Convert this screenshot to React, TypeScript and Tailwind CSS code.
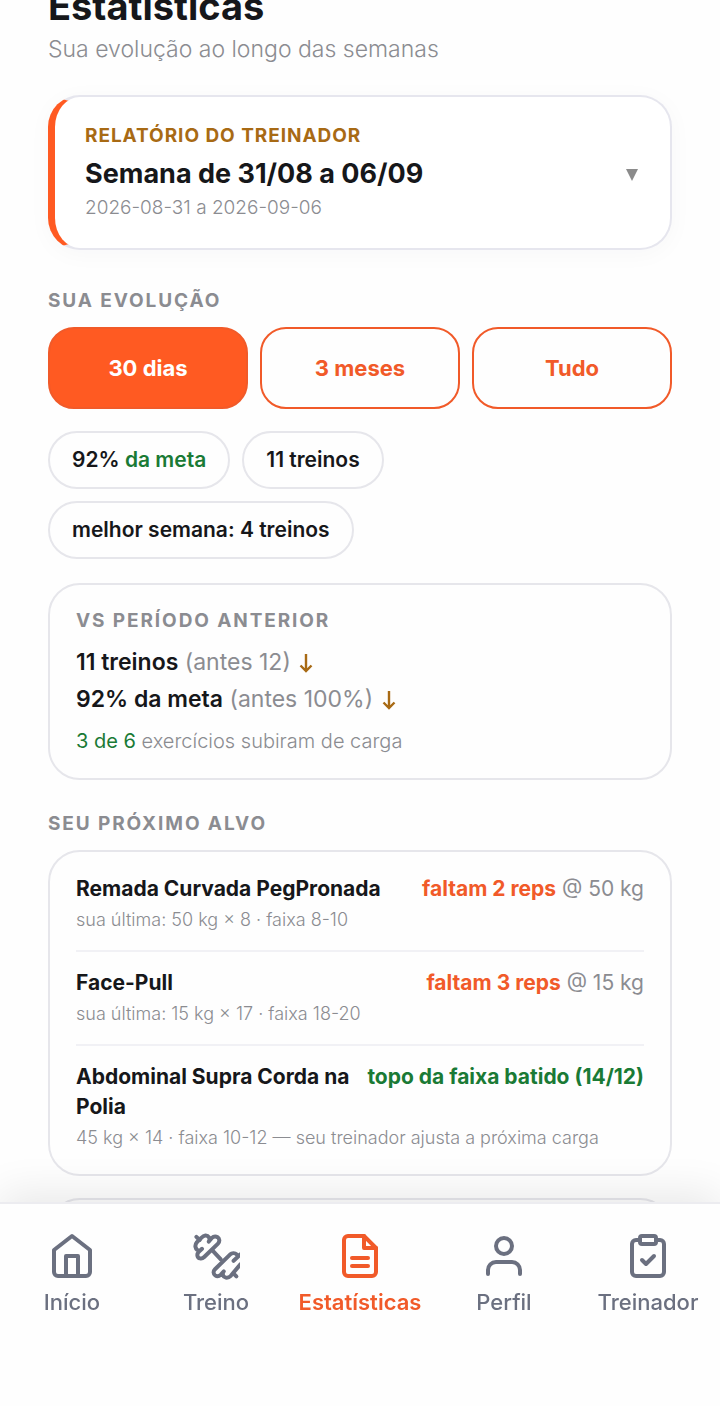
import { useState } from 'react';
import type { ReactNode } from 'react';

type Target = {
  name: string;
  last: string;
  missing?: string;
  load?: string;
  done?: string;
};

const PERIODS = [
  { key: '30d', label: '30 dias' },
  { key: '3m', label: '3 meses' },
  { key: 'all', label: 'Tudo' },
];

const COMPARISON = [
  { now: '11 treinos', before: '(antes 12)' },
  { now: '92% da meta', before: '(antes 100%)' },
];

const TARGETS: Target[] = [
  {
    name: 'Remada Curvada PegPronada',
    last: 'sua última: 50 kg × 8 · faixa 8-10',
    missing: 'faltam 2 reps',
    load: '@ 50 kg',
  },
  {
    name: 'Face-Pull',
    last: 'sua última: 15 kg × 17 · faixa 18-20',
    missing: 'faltam 3 reps',
    load: '@ 15 kg',
  },
  {
    name: 'Abdominal Supra Corda na Polia',
    last: '45 kg × 14 · faixa 10-12 — seu treinador ajusta a próxima carga',
    done: 'topo da faixa batido (14/12)',
  },
];

const NAV_ITEMS = [
  {
    key: 'inicio',
    label: 'Início',
    icon: (
      <>
        <path d="m3 9 9-7 9 7v11a2 2 0 0 1-2 2H5a2 2 0 0 1-2-2z" />
        <path d="M9 22V12h6v10" />
      </>
    ),
  },
  {
    key: 'treino',
    label: 'Treino',
    icon: (
      <>
        <path d="m2.2 2.4 1.6 1.6" />
        <path d="M5 8.4 3.4 9.9C2.2 11.1 2.6 12.9 4 13.2c.8.2 1.500-.1 2.100-.7l6.900-6.700c1-1 .8-2.500-.2-3.200-1-.6-2.200-.3-3 .5L8.400 4.800C9.400 3.200 8.200 1.700 6.700 1.800c-1 .1-1.500.6-2.200 1.300L2.500 5.100C1.200 6.500 1.500 8.600 3.300 9.400" />
        <path d="m10.200 9.200 4.200 4.500" />
        <path d="M24.2 11.200 20.800 14.400M22.400 11.200c-1-.9-2.400-.8-3.400.1l-7.500 7.300c-1 1-.9 2.400.1 3.100.9.6 2 .4 2.800-.4l1.500-1.600c-1 1.300-.4 2.800 1 3.100 1 .2 1.800-.2 2.500-.9L24.200 16.200" />
        <path d="m20.800 20.800 1.400 1.400" />
      </>
    ),
  },
  {
    key: 'estatisticas',
    label: 'Estatísticas',
    icon: (
      <>
        <path d="M14 2H6a2 2 0 0 0-2 2v16a2 2 0 0 0 2 2h12a2 2 0 0 0 2-2V8z" />
        <path d="M14 2v6h6" />
        <path d="M8 13h8" />
        <path d="M8 17h8" />
      </>
    ),
  },
  {
    key: 'perfil',
    label: 'Perfil',
    icon: (
      <>
        <path d="M20 21v-2a4 4 0 0 0-4-4H8a4 4 0 0 0-4 4v2" />
        <circle cx="12" cy="7" r="4" />
      </>
    ),
  },
  {
    key: 'treinador',
    label: 'Treinador',
    icon: (
      <>
        <path d="M16 4h2a2 2 0 0 1 2 2v14a2 2 0 0 1-2 2H6a2 2 0 0 1-2-2V6a2 2 0 0 1 2-2h2" />
        <rect x="8" y="2" width="8" height="4" rx="1" />
        <path d="m9 14 2 2 4-4" />
      </>
    ),
  },
];

function SectionLabel({ children }: { children: ReactNode }) {
  return <h2 className="text-[19px] leading-[26px] font-bold tracking-widest uppercase text-[#8b8c91]">{children}</h2>;
}

function Chip({ children }: { children: ReactNode }) {
  return (
    <li className="rounded-full border-2 border-[#e6e6eb] px-[22px] py-3 text-[21px] leading-[30px] font-semibold">
      {children}
    </li>
  );
}

function TargetRow({ target }: { target: Target }) {
  return (
    <li className="border-b-2 border-[#f1f1f5] py-4 last:border-b-0">
      <div className="flex items-start justify-between gap-3 text-[21px] leading-[30px]">
        <h3 className="font-bold">{target.name}</h3>
        {target.done ? (
          <span className="flex-shrink-0 font-bold text-[#1a7a35]">{target.done}</span>
        ) : (
          <span className="flex-shrink-0 text-[#8b8c91]">
            <b className="font-bold text-[#f15a29]">{target.missing}</b> {target.load}
          </span>
        )}
      </div>
      <p className="mt-0.5 text-lg leading-7 font-light text-[#8b8c91]">{target.last}</p>
    </li>
  );
}

export default function App() {
  const [period, setPeriod] = useState('30d');
  const [tab, setTab] = useState('estatisticas');

  return (
    <div className="min-h-screen overflow-hidden bg-[#fefefe] font-['Inter',sans-serif] text-[#16171a]">
      <main className="px-12">
        {/* Header */}
        <h1 className="-mt-[18px] text-[38px] leading-[48px] font-bold">Estatísticas</h1>
        <p className="text-[23px] leading-[38px] font-light text-[#8b8c91]">Sua evolução ao longo das semanas</p>

        {/* Coach report */}
        <button className="mt-[27px] flex w-full items-center justify-between rounded-[32px] border-2 border-l-[7px] border-[#e6e6ee] border-l-[#ff5a22] bg-white py-[26px] pr-8 pl-[30px] text-left shadow-[0_4px_24px_rgba(20,20,60,0.03)]">
          <span className="flex flex-col">
            <span className="text-[19px] leading-[26px] font-bold tracking-wider uppercase text-[#a86a14]">
              Relatório do treinador
            </span>
            <span className="mt-[7px] text-[27px] leading-9 font-bold">Semana de 31/08 a 06/09</span>
            <span className="mt-0.5 text-[19px] leading-7 font-light text-[#8b8c91]">2026-08-31 a 2026-09-06</span>
          </span>
          <svg width="12" height="16" viewBox="0 0 12 16" className="text-[#8b8b8b]" aria-hidden="true">
            <path d="M0 4h12L6 16z" fill="currentColor" />
          </svg>
        </button>

        {/* Evolution */}
        <section className="mt-[38px]">
          <SectionLabel>Sua evolução</SectionLabel>
          <div className="mt-[13px] grid grid-cols-3 gap-3">
            {PERIODS.map(({ key, label }) => (
              <button
                key={key}
                onClick={() => setPeriod(key)}
                className={`rounded-[26px] border-2 border-[#f15a29] py-[23px] text-[22px] leading-8 font-bold ${
                  period === key ? 'bg-[#ff5a22] text-white' : 'text-[#f15a29]'
                }`}
              >
                {label}
              </button>
            ))}
          </div>

          <ul className="mt-[22px] flex flex-wrap gap-3">
            <Chip>
              92% <span className="text-[#1a7a35]">da meta</span>
            </Chip>
            <Chip>11 treinos</Chip>
            <Chip>melhor semana: 4 treinos</Chip>
          </ul>

          <div className="mt-6 rounded-[32px] border-2 border-[#e6e6eb] px-[26px] py-[23px]">
            <SectionLabel>vs período anterior</SectionLabel>
            <div className="mt-2.5 text-[23px] leading-[37px]">
              {COMPARISON.map(({ now, before }) => (
                <p key={now}>
                  <b className="font-semibold">{now}</b> <span className="text-[#8b8c91]">{before}</span>{' '}
                  <svg
                    width="14"
                    height="20"
                    viewBox="0 0 14 20"
                    fill="none"
                    stroke="currentColor"
                    strokeWidth="2.4"
                    className="ml-0.5 inline-block text-[#a86a14]"
                    aria-label="caiu"
                  >
                    <path d="M7 0v17M1.500 11.500 7 17l5.500-5.500" />
                  </svg>
                </p>
              ))}
            </div>
            <p className="mt-[9px] text-xl leading-7 font-light text-[#8b8c91]">
              <span className="font-normal text-[#1a7a35]">3 de 6</span> exercícios subiram de carga
            </p>
          </div>
        </section>

        {/* Next targets */}
        <section className="mt-[31px]">
          <SectionLabel>Seu próximo alvo</SectionLabel>
          <ul className="mt-[13px] rounded-[32px] border-2 border-[#e6e6eb] px-[26px] py-1.5">
            {TARGETS.map(target => (
              <TargetRow key={target.name} target={target} />
            ))}
          </ul>
        </section>

        <div className="mt-[22px] h-28 rounded-[32px] border-2 border-[#e6e6eb]" />
      </main>

      {/* Bottom navigation */}
      <nav className="fixed inset-x-0 bottom-0 grid grid-cols-5 border-t-2 border-[#ececf0] bg-[#fefefe] pt-7 pb-[90px] shadow-[0_-8px_40px_rgba(0,0,0,0.09)]">
        {NAV_ITEMS.map(({ key, label, icon }) => (
          <a
            key={key}
            href={`#${key}`}
            onClick={() => setTab(key)}
            className={`flex flex-col items-center gap-2 text-[22px] leading-7 ${
              tab === key ? 'font-semibold text-[#f15a29]' : 'font-medium text-[#6b7080]'
            }`}
          >
            <svg
              width="48"
              height="48"
              viewBox="0 0 24 24"
              fill="none"
              stroke="currentColor"
              strokeWidth="2"
              strokeLinecap="round"
              strokeLinejoin="round"
              aria-hidden="true"
            >
              {icon}
            </svg>
            {label}
          </a>
        ))}
      </nav>
    </div>
  );
}
